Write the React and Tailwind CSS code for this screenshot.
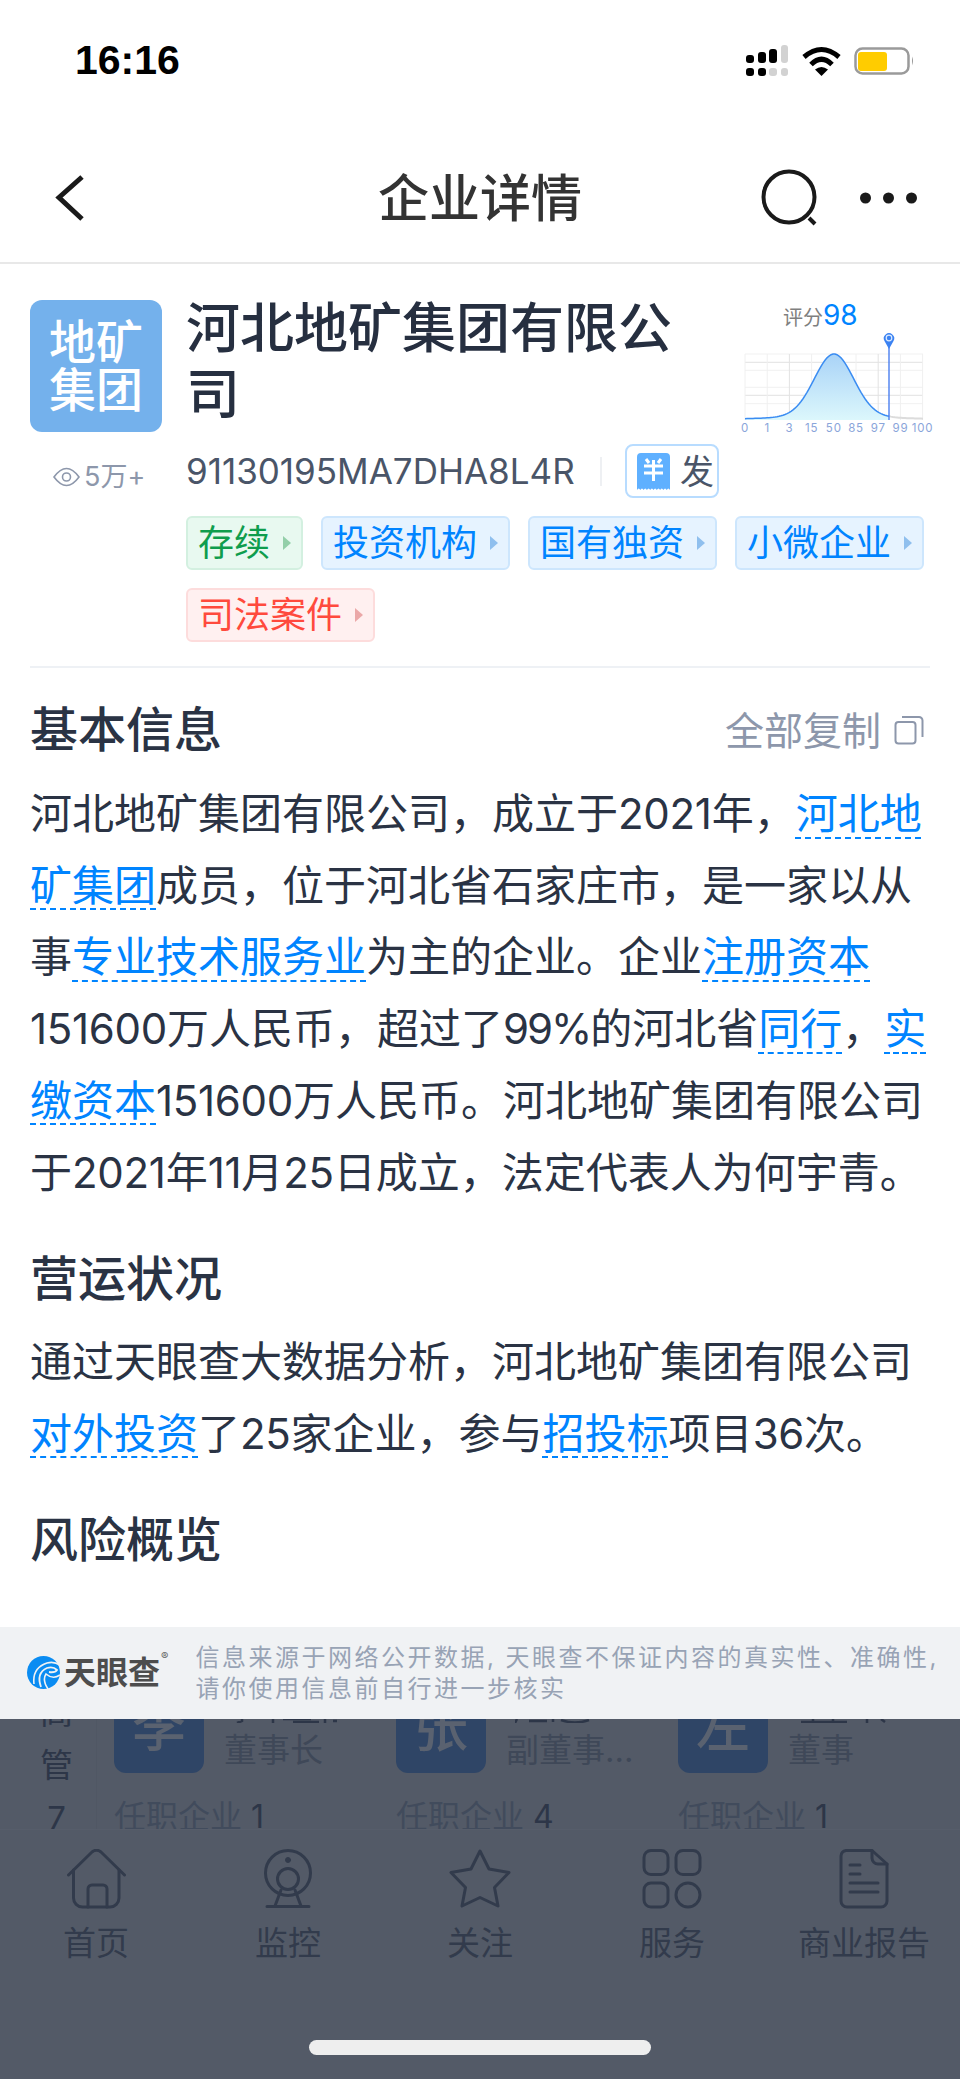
import React from "react";

const tags = [
  { label: "存续", tone: "green" },
  { label: "投资机构", tone: "blue" },
  { label: "国有独资", tone: "blue" },
  { label: "小微企业", tone: "blue" },
  { label: "司法案件", tone: "red" },
];

const toneClass = {
  green: "bg-[#e8f9f0] border-[#d3f0e0] text-[#0f9d4d]",
  blue: "bg-[#e6f3ff] border-[#cde6fd] text-[#0084ff]",
  red: "bg-[#fff0f0] border-[#fddcdc] text-[#ff4a3d]",
};

const arrowClass = {
  green: "fill-[#93cfa9]",
  blue: "fill-[#8fbfee]",
  red: "fill-[#eba8a8]",
};

// nameMarks: the feet of the name line that stick out below the notice bar
const executives = [
  { initial: "李", role: "董事长", count: 1, nameMarks: "M9 0 V2 L4 4 M40 0 V4 M50 0 H78 M60 3 H86 M92 0 V4 M100 2 H104" },
  { initial: "张", role: "副董事…", count: 4, nameMarks: "M2 0 L0 4 M14 2 H32 M38 0 V3 M46 1 Q60 6 74 1" },
  { initial: "左", role: "董事", count: 1, nameMarks: "M4 3 H50 M16 0 V3 M36 0 V3 M70 0 V4 M84 0 L88 3" },
];

const ticks = ["0", "1", "3", "15", "50", "85", "97", "99", "100"];

// bell curve of the score distribution, heavier in the tails than a plain gaussian
const curveY = (x) => {
  const dx = x - 99;
  const h = 0.9 * Math.exp(-(dx * dx) / (2 * 19.5 * 19.5)) + 0.1 / (1 + (dx / 45) * (dx / 45));
  return 90 - 66 * h;
};

const curvePath = (from, to) => {
  const points = [];
  for (let x = from; x <= to; x += 2) points.push(`${x} ${curveY(x).toFixed(2)}`);
  return "M" + points.join(" L");
};

const Wavy = ({ children }) => (
  <span className="text-[#0084ff] underline decoration-dashed decoration-[1.5px] underline-offset-[8px] [text-decoration-skip-ink:none]">
    {children}
  </span>
);

// the digits run a little narrower than Inter's own widths
const Num = ({ children }) => <span className="tracking-[-0.3px]">{children}</span>;

const SignalIcon = () => (
  <svg width="43" height="32" viewBox="0 0 43 32">
    <rect x="0" y="10" width="8" height="8" rx="3" fill="#000" />
    <rect x="12" y="7" width="8" height="11" rx="3" fill="#000" />
    <rect x="23" y="4" width="8" height="14" rx="3" fill="#000" />
    <rect x="35" y="0" width="7" height="18" rx="3" fill="#d2d2d2" />
    <rect x="0" y="23" width="8" height="8" rx="3" fill="#000" />
    <rect x="12" y="23" width="8" height="8" rx="3" fill="#000" />
    <rect x="23" y="23" width="8" height="8" rx="3" fill="#d2d2d2" />
    <rect x="35" y="23" width="7" height="8" rx="3" fill="#d2d2d2" />
  </svg>
);

const WifiIcon = () => (
  <svg width="39" height="30" viewBox="0 0 39 30">
    <path d="M2 11 Q19.5 -4 37 11" fill="none" stroke="#000" strokeWidth="5" />
    <path d="M9 18.5 Q19.5 8 30 18.5" fill="none" stroke="#000" strokeWidth="5" />
    <path d="M19.5 30 L13 23.5 Q19.5 18.5 26 23.5 Z" fill="#000" />
  </svg>
);

const BatteryIcon = () => (
  <svg width="60" height="28" viewBox="0 0 60 28">
    <rect x="1.5" y="1.5" width="53" height="25" rx="7" fill="#fff" stroke="#9a9a9a" strokeWidth="2.5" />
    <rect x="4" y="5" width="29" height="19" rx="3" fill="#ffcc00" />
    <path d="M58 9.5 Q60 14 58 18.5 Z" fill="#9a9a9a" />
  </svg>
);

const ReceiptIcon = () => (
  <svg width="33" height="37" viewBox="0 0 33 37" className="shrink-0">
    <path d="M0 4 a4 4 0 0 1 4 -4 H29 a4 4 0 0 1 4 4 V37 q-1.6 -3 -3.3 0 q-1.6 -3 -3.3 0 q-1.6 -3 -3.3 0 q-1.6 -3 -3.3 0 q-1.6 -3 -3.3 0 q-1.6 -3 -3.3 0 q-1.6 -3 -3.3 0 q-1.6 -3 -3.3 0 q-1.6 -3 -3.3 0 q-1.6 -3 -3.3 0 Z" fill="#5fb0ff" />
    <path d="M9 6 L12 10 M24 6 L21 10 M7 13 H26 M7 20 H26 M16.5 7 V28" fill="none" stroke="#fff" strokeWidth="3" />
  </svg>
);

const SkyEyeMark = () => (
  <svg width="33" height="33" viewBox="0 0 33 33" className="shrink-0">
    <circle cx="16.5" cy="16.5" r="16.5" fill="#0a8cf2" />
    <path d="M7 28 Q5 12 20 7 Q27 5 33 9" fill="none" stroke="#f0f2f4" strokeWidth="1.6" />
    <path d="M14 31 Q9 17 20 12 Q26 10 30 14 Q28 17 22 16" fill="none" stroke="#f0f2f4" strokeWidth="1.8" />
    <path d="M21 33 Q15 24 19 18 Q26 24 33 19" fill="none" stroke="#f0f2f4" strokeWidth="1.6" />
  </svg>
);

const ScoreChart = () => (
  <svg width="200" height="110" viewBox="0 0 200 110" className="block">
    <defs>
      <linearGradient id="score-fill" x1="0" y1="0" x2="0" y2="1">
        <stop offset="0" stopColor="#a9d3f7" />
        <stop offset="1" stopColor="#dcf7fc" />
      </linearGradient>
    </defs>
    {[24, 40.3, 57.3, 73.7].map((y) => (
      <line key={y} x1="10" x2="188" y1={y} y2={y} stroke="#f1f1f1" />
    ))}
    {[32.3, 65.3].map((y) => (
      <line key={y} x1="10" x2="188" y1={y} y2={y} stroke="#e2e2e2" />
    ))}
    {ticks.map((t, i) => (
      <line key={t} x1={10 + i * 22.2} x2={10 + i * 22.2} y1="24" y2="90" stroke={i === 2 || i === 6 ? "#e2e2e2" : "#f0f0f0"} />
    ))}
    <path d={`${curvePath(10, 154)} L154 90 L10 90 Z`} fill="url(#score-fill)" />
    <path d={curvePath(154, 188)} fill="none" stroke="#dcdcdc" strokeWidth="2" />
    <path d={curvePath(10, 154)} fill="none" stroke="#3a8cf2" strokeWidth="1.5" />
    <line x1="154" x2="154" y1="16" y2="90" stroke="#4a7ff0" strokeWidth="1.4" />
    <path d="M154 19 L149.5 11 A5.2 5.2 0 1 1 158.5 11 Z" fill="#3b82f2" />
    <circle cx="154" cy="8" r="2.8" fill="#3b82f2" stroke="#dcebff" strokeWidth="1.2" />
    {ticks.map((t, i) => (
      <text key={t} x={10 + i * 22.2} y="102" textAnchor="middle" fontSize="11.5" letterSpacing="0.8" fill="#8aa5da">
        {t}
      </text>
    ))}
  </svg>
);

const TabIcon = ({ name }) => {
  const stroke = {
    fill: "none",
    stroke: "#323b4c",
    strokeWidth: 3,
    strokeLinecap: "round",
    strokeLinejoin: "round",
  };
  return (
    <svg width="64" height="60" viewBox="0 0 64 60" className="block">
      {name === "home" && (
        <g {...stroke}>
          <path d="M4.5 26 L28 3 Q32.5 -0.5 37 3 L60.5 26" />
          <path d="M9.5 21 V49 a9 9 0 0 0 9 9 H46 a9 9 0 0 0 9 -9 V21" />
          <path d="M24 58 V40 a4 4 0 0 1 4 -4 H39 a4 4 0 0 1 4 4 V58" />
        </g>
      )}
      {name === "monitor" && (
        <g {...stroke}>
          <circle cx="32" cy="24" r="22.5" />
          <circle cx="32" cy="30" r="10.5" />
          <circle cx="32" cy="11" r="2.5" fill="#323b4c" strokeWidth="1" />
          <path d="M25 41 L19 57 M39 41 L45 57 M11 57.5 H53" />
        </g>
      )}
      {name === "star" && (
        <g {...stroke}>
          <path d="M32 2 L41 20 L61 23.5 L46.5 38.5 L50 57 L32 48.5 L14 57 L17.5 38.5 L3 23.5 L23 20 Z" />
        </g>
      )}
      {name === "grid" && (
        <g {...stroke}>
          <rect x="4" y="1.5" width="24" height="24" rx="7" />
          <rect x="36" y="1.5" width="24" height="24" rx="7" />
          <rect x="4" y="34" width="24" height="24" rx="7" />
          <circle cx="48" cy="46" r="12" />
        </g>
      )}
      {name === "report" && (
        <g {...stroke}>
          <path d="M14 1.5 H40 L55 15 V52 a6 6 0 0 1 -6 6 H15 a6 6 0 0 1 -6 -6 V7 a6 6 0 0 1 5 -5.5 Z" />
          <path d="M40 1.5 V9 a6 6 0 0 0 6 6 H55" />
          <path d="M18 16 H28 M18 25 H28 M18 34 H46 M18 43 H46" />
        </g>
      )}
    </svg>
  );
};

const tabs = [
  { icon: "home", label: "首页" },
  { icon: "monitor", label: "监控" },
  { icon: "star", label: "关注" },
  { icon: "grid", label: "服务" },
  { icon: "report", label: "商业报告" },
];

export default function App() {
  return (
    <div className="w-[960px] h-[2079px] overflow-hidden bg-white flex flex-col [font-family:Inter,'Noto_Sans_CJK_SC',sans-serif]">
      {/* Status bar */}
      <div className="h-[122px] shrink-0 flex items-center justify-between pl-[75px] pr-[46px]">
        <span className="text-[41px] font-bold text-black [font-family:'Liberation_Sans',sans-serif]">16:16</span>
        <div className="flex items-center gap-[13px]">
          <SignalIcon />
          <WifiIcon />
          <BatteryIcon />
        </div>
      </div>

      {/* Nav bar */}
      <div className="h-[142px] shrink-0 pt-[12px] grid grid-cols-[1fr_auto_1fr] items-center border-b-2 border-[#e8e8e8]">
        <div className="pl-[54px]">
          <svg width="32" height="48" viewBox="0 0 32 48" className="block">
            <path d="M28 3 L5 23.5 L28 45" fill="none" stroke="#1a1a1a" strokeWidth="5" />
          </svg>
        </div>
        <div className="text-[51px] leading-none font-medium text-[#333]">企业详情</div>
        <div className="flex items-center justify-end gap-[41px] pr-[43px]">
          <svg width="58" height="58" viewBox="0 0 58 58" className="block">
            <circle cx="28" cy="28" r="25.5" fill="none" stroke="#1a1a1a" strokeWidth="4" />
            <path d="M48 49 L54 55" stroke="#1a1a1a" strokeWidth="4" />
          </svg>
          <svg width="57" height="12" viewBox="0 0 57 12" className="block">
            <circle cx="5.5" cy="6" r="5.5" fill="#1a1a1a" />
            <circle cx="28.5" cy="6" r="5.5" fill="#1a1a1a" />
            <circle cx="51.5" cy="6" r="5.5" fill="#1a1a1a" />
          </svg>
        </div>
      </div>

      {/* Company header */}
      <div className="mx-[30px] h-[404px] shrink-0 pt-[36px] flex gap-[24px] border-b-2 border-[#eef1f5]">
        <div className="w-[132px] shrink-0">
          <div className="w-[132px] h-[132px] rounded-[12px] bg-[#74b1ec] flex items-center justify-center text-center text-[47px] leading-[48px] font-medium text-white">
            地矿
            <br />
            集团
          </div>
          <div className="mt-[29px] pl-[23px] flex items-center gap-[4px] text-[27px] leading-[32px] text-[#8d97ab]">
            <svg width="27" height="20" viewBox="0 0 27 20" className="shrink-0">
              <path d="M1 10 Q13.5 -7 26 10 Q13.5 27 1 10 Z" fill="none" stroke="#8d97ab" strokeWidth="1.6" />
              <circle cx="13.5" cy="10" r="4" fill="none" stroke="#8d97ab" strokeWidth="1.6" />
            </svg>
            <span>5万+</span>
          </div>
        </div>

        <div className="flex-1 min-w-0">
          <div className="h-[144px] flex justify-between">
            <h1 className="w-[490px] -mt-[4px] text-[54px] leading-[66px] font-medium text-[#262f40]">
              河北地矿集团有限公司
            </h1>
            <div className="w-[200px] -mr-[5px] shrink-0">
              <div className="h-[30px] pl-[48px] flex items-baseline text-[20px] text-[#7f7f7f] leading-[30px]">
                评分<span className="text-[28px] text-[#0084ff]">98</span>
              </div>
              <ScoreChart />
            </div>
          </div>

          <div className="h-[54px] flex items-center">
            <span className="w-[414px] text-[35px] text-[#4a5568] whitespace-nowrap">91130195MA7DHA8L4R</span>
            <span className="w-[2px] h-[29px] bg-[#eef0f3]" />
            <div className="ml-[23px] w-[94px] h-[54px] border-2 border-[#b8dcff] rounded-[8px] pl-[10px] flex items-center">
              <div className="w-[77px] overflow-hidden flex items-center gap-[10px] text-[34px] text-[#4a5568] whitespace-nowrap">
                <ReceiptIcon />
                <span>发票</span>
              </div>
            </div>
          </div>

          <div className="mt-[18px] flex flex-wrap gap-x-[18px] gap-y-[18px]">
            {tags.map((tag) => (
              <div
                key={tag.label}
                className={`h-[54px] flex items-center gap-[13px] pl-[10px] pr-[10px] border-2 rounded-[6px] text-[36px] leading-none ${toneClass[tag.tone]}`}
              >
                <span>{tag.label}</span>
                <svg width="8" height="14" viewBox="0 0 8 14" className={arrowClass[tag.tone]}>
                  <path d="M0 0 L8 7 L0 14 Z" />
                </svg>
              </div>
            ))}
          </div>
        </div>
      </div>

      {/* Summary text */}
      <div className="px-[30px] text-[#2a3344]">
        <div className="mt-[38px] h-[48px] flex items-center justify-between">
          <h2 className="text-[48px] leading-[48px] font-medium">基本信息</h2>
          <div className="mr-[6px] flex items-center gap-[13px] text-[39px] leading-none text-[#8d97ab]">
            <span>全部复制</span>
            <svg width="30" height="30" viewBox="0 0 30 30" className="block">
              <rect x="1.5" y="7" width="20" height="21.5" rx="3" fill="none" stroke="#8d97ab" strokeWidth="2" />
              <path d="M8 2 H25 a3.5 3.5 0 0 1 3.5 3.5 V22" fill="none" stroke="#8d97ab" strokeWidth="2" />
            </svg>
          </div>
        </div>
        <p className="mt-[24px] text-[42px] leading-[71.7px] whitespace-nowrap">
          河北地矿集团有限公司，成立于<Num>2021</Num>年，<Wavy>河北地</Wavy>
          <br />
          <Wavy>矿集团</Wavy>成员，位于河北省石家庄市，是一家以从
          <br />
          事<Wavy>专业技术服务业</Wavy>为主的企业。企业<Wavy>注册资本</Wavy>
          <br />
          <Num>151600</Num>万人民币，超过了<span className="tracking-[-2px]">99%</span>的河北省<Wavy>同行</Wavy>，<Wavy>实</Wavy>
          <br />
          <Wavy>缴资本</Wavy><Num>151600</Num>万人民币。河北地矿集团有限公司
          <br />
          于<Num>2021</Num>年<Num>11</Num>月<Num>25</Num>日成立，法定代表人为何宇青。
        </p>

        <h2 className="mt-[47px] text-[48px] leading-[48px] font-medium">营运状况</h2>
        <p className="mt-[23px] text-[42px] leading-[71.7px] whitespace-nowrap">
          通过天眼查大数据分析，河北地矿集团有限公司
          <br />
          <Wavy>对外投资</Wavy>了<Num>25</Num>家企业，参与<Wavy>招投标</Wavy>项目<Num>36</Num>次。
        </p>

        <h2 className="mt-[46px] text-[48px] leading-[48px] font-medium">风险概览</h2>
      </div>

      {/* Data source notice */}
      <div className="mt-[63px] h-[92px] shrink-0 bg-[#f0f2f4] flex items-center pl-[27px]">
        <SkyEyeMark />
        <span className="ml-[4px] text-[32px] leading-none font-bold text-[#4d4d4d]">天眼查</span>
        <span className="ml-[1px] self-start mt-[24px] text-[11px] leading-none text-[#666]">®</span>
        <p className="ml-[27px] text-[24px] leading-[31px] tracking-[2.5px] text-[#98a3b5] whitespace-nowrap">
          信息来源于网络公开数据, 天眼查不保证内容的真实性、准确性,
          <br />
          请你使用信息前自行进一步核实
        </p>
      </div>

      {/* Dimmed page content under the sheet */}
      <div className="h-[110px] shrink-0 overflow-hidden bg-[#535a67] flex">
        <div className="w-[97px] shrink-0 -mt-[36px] pt-[3px] pl-[40px] border-r border-[#505764] text-[33px] leading-[53px] text-[#2d3648]">
          <div className="w-[33px] text-center">高</div>
          <div className="w-[33px] text-center">管</div>
          <div className="w-[33px] text-center">7</div>
        </div>
        <div className="flex -mt-[36px] pl-[17px]">
          {executives.map((e) => (
            <div key={e.initial} className="w-[282px]">
              <div className="flex">
                <div className="w-[90px] h-[90px] rounded-[12px] bg-[#2f4566] flex items-center justify-center text-[54px] font-medium leading-none text-[#5a6270]">
                  {e.initial}
                </div>
                <div className="ml-[20px] pt-[36px]">
                  <svg width="110" height="4" viewBox="0 0 110 4" className="block ml-[9px]">
                    <path d={e.nameMarks} fill="none" stroke="#2d3648" strokeWidth="2.5" />
                  </svg>
                  <div className="mt-[6px] text-[33px] leading-[42px] text-[#3f4858]">{e.role}</div>
                </div>
              </div>
              <div className="mt-[21px] text-[32px] leading-[45px] text-[#414b5c]">
                任职企业 <span className="text-[#2d3648]">{e.count}</span>
              </div>
            </div>
          ))}
        </div>
      </div>

      {/* Bottom tab bar */}
      <div className="flex-1 bg-[#535a67] border-t border-[#565d6a] flex flex-col">
        <div className="grid grid-cols-5 pt-[19px]">
          {tabs.map((tab) => (
            <div key={tab.label} className="flex flex-col items-center">
              <TabIcon name={tab.icon} />
              <span className="mt-[14px] text-[33px] leading-[40px] text-[#323b4c]">{tab.label}</span>
            </div>
          ))}
        </div>
        <div className="mt-[77px] mx-auto w-[342px] h-[15px] rounded-full bg-[#eeeeee]" />
      </div>
    </div>
  );
}
